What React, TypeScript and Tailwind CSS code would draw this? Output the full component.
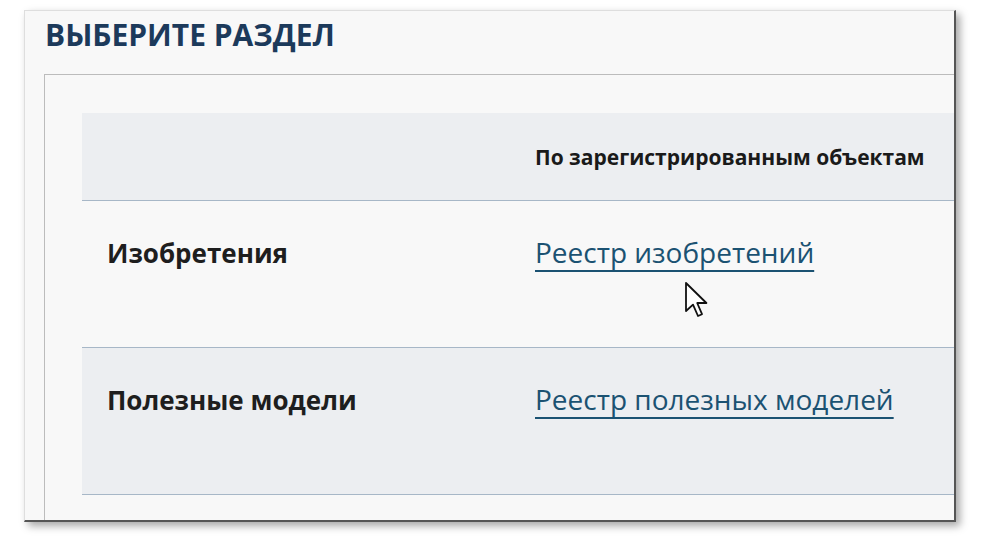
import React from "react";

const rows = [
  { label: "Изобретения", link: "Реестр изобретений", bg: "bg-[#f8f8f8]" },
  { label: "Полезные модели", link: "Реестр полезных моделей", bg: "bg-[#eceef1]" },
];

function Cursor() {
  return (
    <svg width="26" height="40" viewBox="0 0 13 20" className="absolute left-[684px] top-[281px]">
      <path
        d="M1 1 L1 15 L4.5 11.8 L7 17.5 L9 16.6 L6.6 11 L11.2 11 Z"
        fill="#ffffff"
        stroke="#111111"
        strokeWidth="0.9"
        strokeLinejoin="round"
      />
    </svg>
  );
}

export default function App() {
  return (
    <div
      className="relative w-[992px] h-[544px] bg-white overflow-hidden pt-[10px] pl-[24px]"
      style={{ fontFamily: '"Open Sans", "Noto Sans", sans-serif' }}
    >
      <div className="w-[932px] h-[512px] bg-[#f8f8f8] border-l border-t border-[#dedede] border-r-2 border-b-2 border-r-[#555] border-b-[#555] shadow-[4px_4px_8px_rgba(0,0,0,0.35)] overflow-hidden flex flex-col">
        <div className="h-[63px] pl-[20px] pt-[9px]">
          <h1 className="text-[30px] font-bold text-[#1c3a5b] leading-none">
            ВЫБЕРИТЕ РАЗДЕЛ
          </h1>
        </div>
        <div className="flex-1 ml-[19px] border-l border-t border-[#bcbcbc] pt-[38px] pl-[37px]">
          <div className="flex flex-col">
            <div className="h-[88px] bg-[#eceef1] border-b border-[#a7b7c7] grid grid-cols-[453px_1fr] items-start">
              <div />
              <div className="pt-[34px] text-[21px] leading-none font-bold text-[#1a1a1a] whitespace-nowrap">
                По зарегистрированным объектам
              </div>
            </div>
            {rows.map((r) => (
              <div
                key={r.label}
                className={`h-[147px] ${r.bg} border-b border-[#a7b7c7] grid grid-cols-[453px_1fr] items-start`}
              >
                <div className="pt-[39px] pl-[25px] text-[26px] leading-none font-bold text-[#1e1e1e] whitespace-nowrap">
                  {r.label}
                </div>
                <div className="pt-[37px] leading-none">
                  <a className="text-[28px] leading-none text-[#1b5272] underline underline-offset-[7px] decoration-[1.5px] cursor-pointer whitespace-nowrap">
                    {r.link}
                  </a>
                </div>
              </div>
            ))}
          </div>
        </div>
      </div>
      <Cursor />
    </div>
  );
}
